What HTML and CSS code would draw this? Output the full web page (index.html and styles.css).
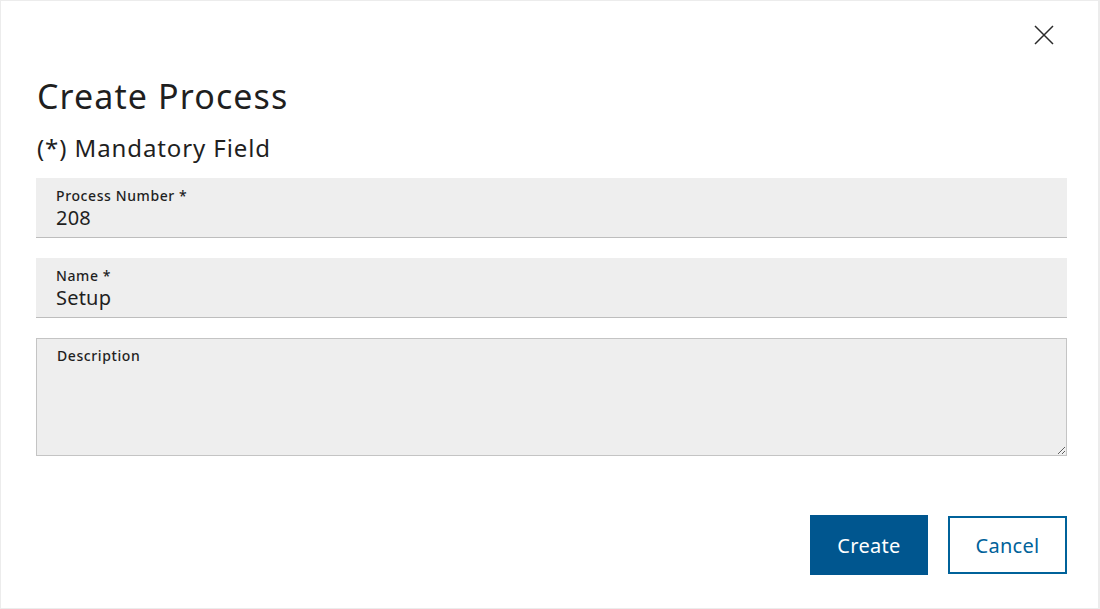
FILE: index.html
```html
<!DOCTYPE html>
<html lang="en">
<head>
<meta charset="utf-8">
<title>Create Process</title>
<link rel="stylesheet" href="styles.css">
</head>
<body>
<div class="dialog">
  <div class="dialog-top">
    <button class="close" aria-label="Close">
      <svg width="20" height="20" viewBox="0 0 20 20"><path d="M1 1 L19 19 M19 1 L1 19" stroke="#2a2a2a" stroke-width="1.5" fill="none"/></svg>
    </button>
  </div>
  <h1 class="title">Create Process</h1>
  <p class="subtitle">(*) Mandatory Field</p>
  <div class="field">
    <label class="field-label">Process Number *</label>
    <div class="field-value">208</div>
  </div>
  <div class="field">
    <label class="field-label">Name *</label>
    <div class="field-value">Setup</div>
  </div>
  <div class="field-area">
    <label class="field-label">Description</label>
    <textarea class="area-input"></textarea>
  </div>
  <div class="actions">
    <button class="btn btn-primary">Create</button>
    <button class="btn btn-secondary">Cancel</button>
  </div>
</div>
</body>
</html>
```
FILE: styles.css
```css
* { box-sizing: border-box; }
html, body { margin: 0; padding: 0; background: #fff; }
body { font-family: "Noto Sans", "Open Sans", sans-serif; color: #1f1f1f; }
.dialog {
  width: 1100px;
  height: 609px;
  border: 1px solid #ececec;
  border-right-width: 2px;
  padding: 0 31px 0 35px;
  display: flex;
  flex-direction: column;
}
.dialog-top {
  display: flex;
  justify-content: flex-end;
  padding-top: 24px;
  padding-right: 13px;
}
.close {
  width: 20px; height: 20px; padding: 0; border: 0; background: none;
  display: block;
}
.close svg { display: block; }
.title {
  margin: 29px 0 0 1px;
  font-size: 34px;
  font-weight: 400;
  line-height: 44px;
  letter-spacing: 1.1px;
  color: #1f1f1f;
}
.subtitle {
  margin: 13px 0 13px 1px;
  font-size: 24px;
  line-height: 34px;
  letter-spacing: 0.9px;
  color: #1f1f1f;
}
.field {
  height: 60px;
  background: #eeeeee;
  border-bottom: 1px solid #bdbdbd;
  padding: 8px 20px 0 20px;
  margin-bottom: 20px;
}
.field-label {
  display: block;
  font-size: 14px;
  font-weight: 500;
  line-height: 20px;
  letter-spacing: 0.6px;
  color: #1f1f1f;
}
.field-value {
  font-size: 20px;
  line-height: 24px;
  letter-spacing: 0.2px;
  color: #1f1f1f;
}
.field-area {
  height: 118px;
  background: #eeeeee;
  border: 1px solid #c4c4c4;
  display: flex;
  flex-direction: column;
  padding: 7px 0 0 20px;
}
.area-input {
  flex: 1;
  border: 0;
  background: transparent;
  outline: none;
  resize: vertical;
  font: inherit;
}
.actions {
  display: flex;
  justify-content: flex-end;
  gap: 20px;
  margin-top: 59px;
}
.btn {
  height: 60px;
  width: 118px;
  font-family: "Noto Sans", sans-serif;
  font-size: 20px;
  letter-spacing: 0.3px;
  cursor: pointer;
}
.btn-primary {
  background: #00568f;
  color: #fff;
  border: 0;
}
.btn-secondary {
  width: 119px;
  height: 58px;
  margin-top: 1px;
  background: #fff;
  color: #00629a;
  border: 2px solid #00629a;
}
```
